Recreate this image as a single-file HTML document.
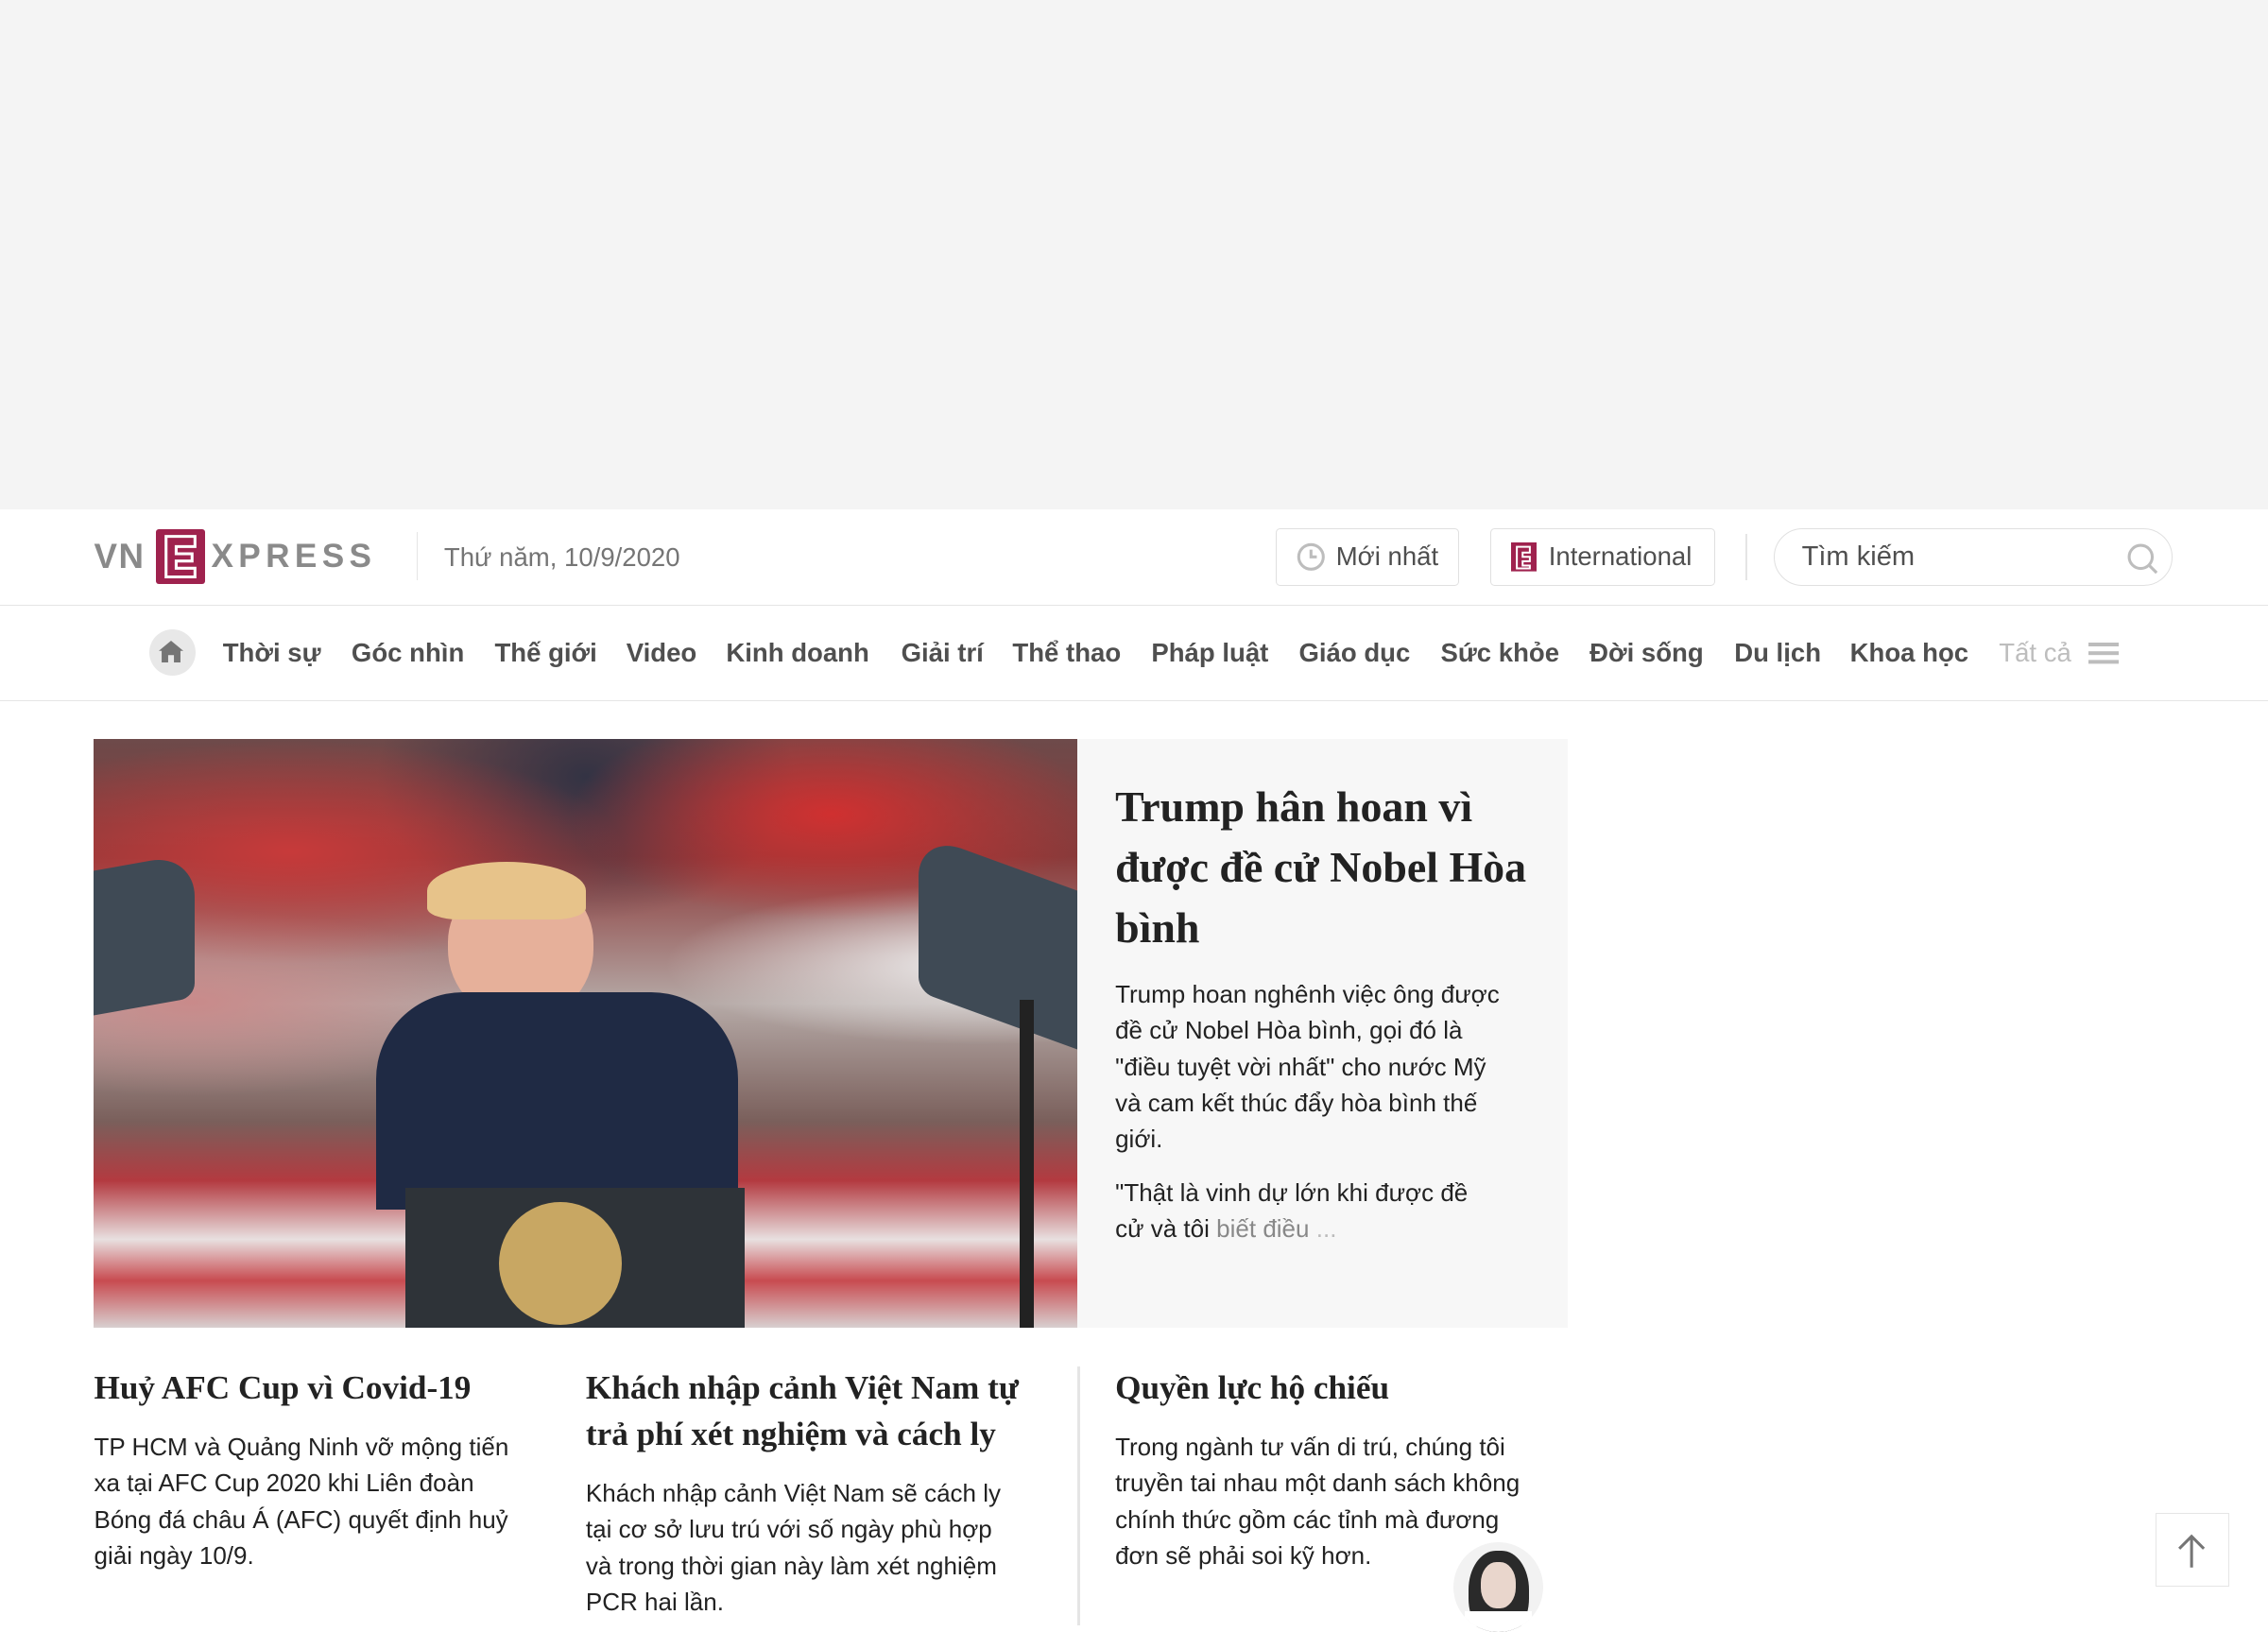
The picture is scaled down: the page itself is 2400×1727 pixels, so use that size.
<!DOCTYPE html>
<html><head><meta charset="utf-8"><style>
html{zoom:1.5306}
body{margin:0;width:1568px;height:1124px;overflow:hidden;background:#fff;font-family:"Liberation Sans",Arial,sans-serif;color:#222;position:relative}
.abs{position:absolute}
.top{left:0;top:0;width:1568px;height:352px;background:#f4f4f4}
.hdr{left:0;top:352px;width:1568px;height:66px;border-bottom:1px solid #e5e5e5}
.nav{left:0;top:419px;width:1568px;height:65px;border-bottom:1px solid #e5e5e5}
.btn{border:1px solid #e0e0e0;border-radius:3px;height:40px;top:365px;font-size:18px;color:#4f4f4f;display:flex;align-items:center;box-sizing:border-box}
.nav span{position:absolute;top:441px;font-size:18px;font-weight:bold;color:#4f4f4f;white-space:nowrap}
.serif{font-family:"Liberation Serif",Georgia,serif;font-weight:bold;color:#222}
.p{font-size:17px;line-height:25px;color:#222}
</style></head><body>
<div class="abs top"></div>
<div class="abs hdr"></div>
<div class="abs" style="left:65px;top:371px;font-size:24px;font-weight:bold;color:#8a8a8a;letter-spacing:1px;line-height:28px">VN</div>
<div class="abs" style="left:108px;top:366px;width:34px;height:38px;background:#9f224e;border-radius:2px"></div>
<svg class="abs" style="left:108px;top:366px" width="34" height="38" viewBox="0 0 34 38"><path d="M7 5h20v7H14v5h11v5H14v5h13v6H7z" fill="none" stroke="#fff" stroke-width="2"/></svg>
<div class="abs" style="left:146px;top:371px;font-size:23px;font-weight:bold;color:#8a8a8a;letter-spacing:3.5px;line-height:28px">XPRESS</div>
<div class="abs" style="left:288px;top:368px;width:1px;height:33px;background:#e5e5e5"></div>
<div class="abs" style="left:307px;top:375px;font-size:18px;color:#757575">Thứ năm, 10/9/2020</div>
<div class="abs btn" style="left:882px;width:127px;padding-left:14px"><svg width="20" height="20" viewBox="0 0 20 20" style="margin-right:7px"><circle cx="10" cy="10" r="8.5" fill="none" stroke="#bdbdbd" stroke-width="2"/><path d="M10 5v5h4" fill="none" stroke="#bdbdbd" stroke-width="2"/></svg>Mới nhất</div>
<div class="abs btn" style="left:1030px;width:156px;padding-left:14px"><svg width="18" height="20" viewBox="0 0 18 20" style="margin-right:8px"><rect width="18" height="20" fill="#9f224e"/><path d="M4 3h9v4H8v3h5v3H8v3h5v2H4z" fill="none" stroke="#fff" stroke-width="1.3"/></svg>International</div>
<div class="abs" style="left:1207px;top:369px;width:1px;height:32px;background:#e5e5e5"></div>
<div class="abs btn" style="left:1226px;width:276px;border-radius:20px;padding-left:19px;font-size:19px">Tìm kiếm</div>
<svg class="abs" style="left:1470px;top:375px" width="24" height="24" viewBox="0 0 24 24"><circle cx="10" cy="10" r="8" fill="none" stroke="#bdbdbd" stroke-width="2"/><path d="M16 16l5 5" stroke="#bdbdbd" stroke-width="2"/></svg>
<div class="abs nav"></div>
<div class="nav">
<div class="abs" style="left:103px;top:435px;width:32px;height:32px;border-radius:50%;background:#e8e8e8"></div>
<svg class="abs" style="left:110px;top:443px" width="17" height="15" viewBox="0 0 17 15"><path d="M8.5 0L0 7h2v8h4.5v-5h4v5H15V7h2z" fill="#757575"/></svg>
<span style="left:154px">Thời sự</span><span style="left:243px">Góc nhìn</span><span style="left:342px">Thế giới</span><span style="left:433px">Video</span><span style="left:502px">Kinh doanh</span><span style="left:623px">Giải trí</span><span style="left:700px">Thể thao</span><span style="left:796px">Pháp luật</span><span style="left:898px">Giáo dục</span><span style="left:996px">Sức khỏe</span><span style="left:1099px">Đời sống</span><span style="left:1199px">Du lịch</span><span style="left:1279px">Khoa học</span><span style="left:1382px;font-weight:normal;color:#bdbdbd">Tất cả</span>
<div class="abs" style="left:1444px;top:444px;width:21px;height:3px;background:#bdbdbd;box-shadow:0 6px 0 #bdbdbd,0 12px 0 #bdbdbd"></div>
</div>
<div class="abs" style="left:65px;top:511px;width:680px;height:407px;overflow:hidden;background:linear-gradient(180deg,#6d4a4a 0%,#8a3a3a 20%,#b5a9a6 45%,#7a5f5b 65%,#b33a40 75%,#e8e0e0 85%,#c84b50 92%,#d8d0d0 100%)">
<div class="abs" style="left:0;top:0;width:680px;height:260px;background:radial-gradient(ellipse at 20% 30%,#c73a3a 0,transparent 30%),radial-gradient(ellipse at 75% 20%,#d03030 0,transparent 25%),radial-gradient(ellipse at 50% 10%,#334 0,transparent 30%),radial-gradient(ellipse at 90% 60%,#eee 0,transparent 25%),radial-gradient(ellipse at 10% 70%,#c98a8a 0,transparent 25%)"></div>
<div class="abs" style="left:0;top:85px;width:70px;height:100px;background:#3f4a55;border-radius:0 30px 10px 0;transform:skewY(-10deg)"></div>
<div class="abs" style="left:570px;top:85px;width:110px;height:110px;background:#3f4a55;border-radius:30px 0 0 10px;transform:skewY(20deg)"></div>
<div class="abs" style="left:245px;top:95px;width:100px;height:100px;background:#e6b09a;border-radius:45% 45% 50% 50%"></div>
<div class="abs" style="left:230px;top:85px;width:110px;height:40px;background:#e7c38a;border-radius:50% 50% 20% 20%"></div>
<div class="abs" style="left:195px;top:175px;width:250px;height:150px;background:#1f2a44;border-radius:60px 60px 0 0"></div>
<div class="abs" style="left:215px;top:310px;width:235px;height:97px;background:#2e3338"></div>
<div class="abs" style="left:280px;top:320px;width:85px;height:85px;border-radius:50%;background:#c8a763"></div>
<div class="abs" style="left:640px;top:180px;width:10px;height:227px;background:#222"></div>
</div>
<div class="abs" style="left:745px;top:511px;width:339px;height:407px;background:#f7f7f7"></div>
<div class="abs serif" style="left:771px;top:537px;width:290px;font-size:30px;line-height:42px">Trump hân hoan vì được đề cử Nobel Hòa bình</div>
<div class="abs p" style="left:771px;top:675px;width:272px">Trump hoan nghênh việc ông được đề cử Nobel Hòa bình, gọi đó là "điều tuyệt vời nhất" cho nước Mỹ và cam kết thúc đẩy hòa bình thế giới.</div>
<div class="abs p" style="left:771px;top:812px;width:262px">"Thật là vinh dự lớn khi được đề cử và tôi <span style="color:#888">biết điều</span> <span style="color:#bbb">...</span></div>
<div class="abs serif" style="left:65px;top:944px;width:320px;font-size:23px;line-height:32px">Huỷ AFC Cup vì Covid-19</div>
<div class="abs p" style="left:65px;top:988px;width:300px">TP HCM và Quảng Ninh vỡ mộng tiến xa tại AFC Cup 2020 khi Liên đoàn Bóng đá châu Á (AFC) quyết định huỷ giải ngày 10/9.</div>
<div class="abs serif" style="left:405px;top:944px;width:300px;font-size:23px;line-height:32px">Khách nhập cảnh Việt Nam tự trả phí xét nghiệm và cách ly</div>
<div class="abs p" style="left:405px;top:1020px;width:298px">Khách nhập cảnh Việt Nam sẽ cách ly tại cơ sở lưu trú với số ngày phù hợp và trong thời gian này làm xét nghiệm PCR hai lần.</div>
<div class="abs" style="left:745px;top:945px;width:2px;height:179px;background:#e5e5e5"></div>
<div class="abs serif" style="left:771px;top:944px;width:310px;font-size:23px;line-height:32px">Quyền lực hộ chiếu</div>
<div class="abs p" style="left:771px;top:988px;width:292px">Trong ngành tư vấn di trú, chúng tôi truyền tai nhau một danh sách không chính thức gồm các tỉnh mà đương đơn sẽ phải soi kỹ hơn.</div>
<div class="abs" style="left:1005px;top:1066px;width:62px;height:62px;border-radius:50%;background:#f2f2f2;overflow:hidden"><div class="abs" style="left:10px;top:6px;width:42px;height:60px;border-radius:45%;background:#2a2a2a"></div><div class="abs" style="left:19px;top:14px;width:24px;height:32px;border-radius:45%;background:#e9d6cc"></div><div class="abs" style="left:8px;top:48px;width:46px;height:20px;background:#fff"></div></div>
<div class="abs" style="left:1490px;top:1046px;width:51px;height:51px;border:1px solid #e5e5e5;box-sizing:border-box;background:#fff"></div>
<svg class="abs" style="left:1503px;top:1060px" width="25" height="25" viewBox="0 0 25 25"><path d="M12.5 24V3M4 11l8.5-8.5L21 11" fill="none" stroke="#757575" stroke-width="2"/></svg>
</body></html>
